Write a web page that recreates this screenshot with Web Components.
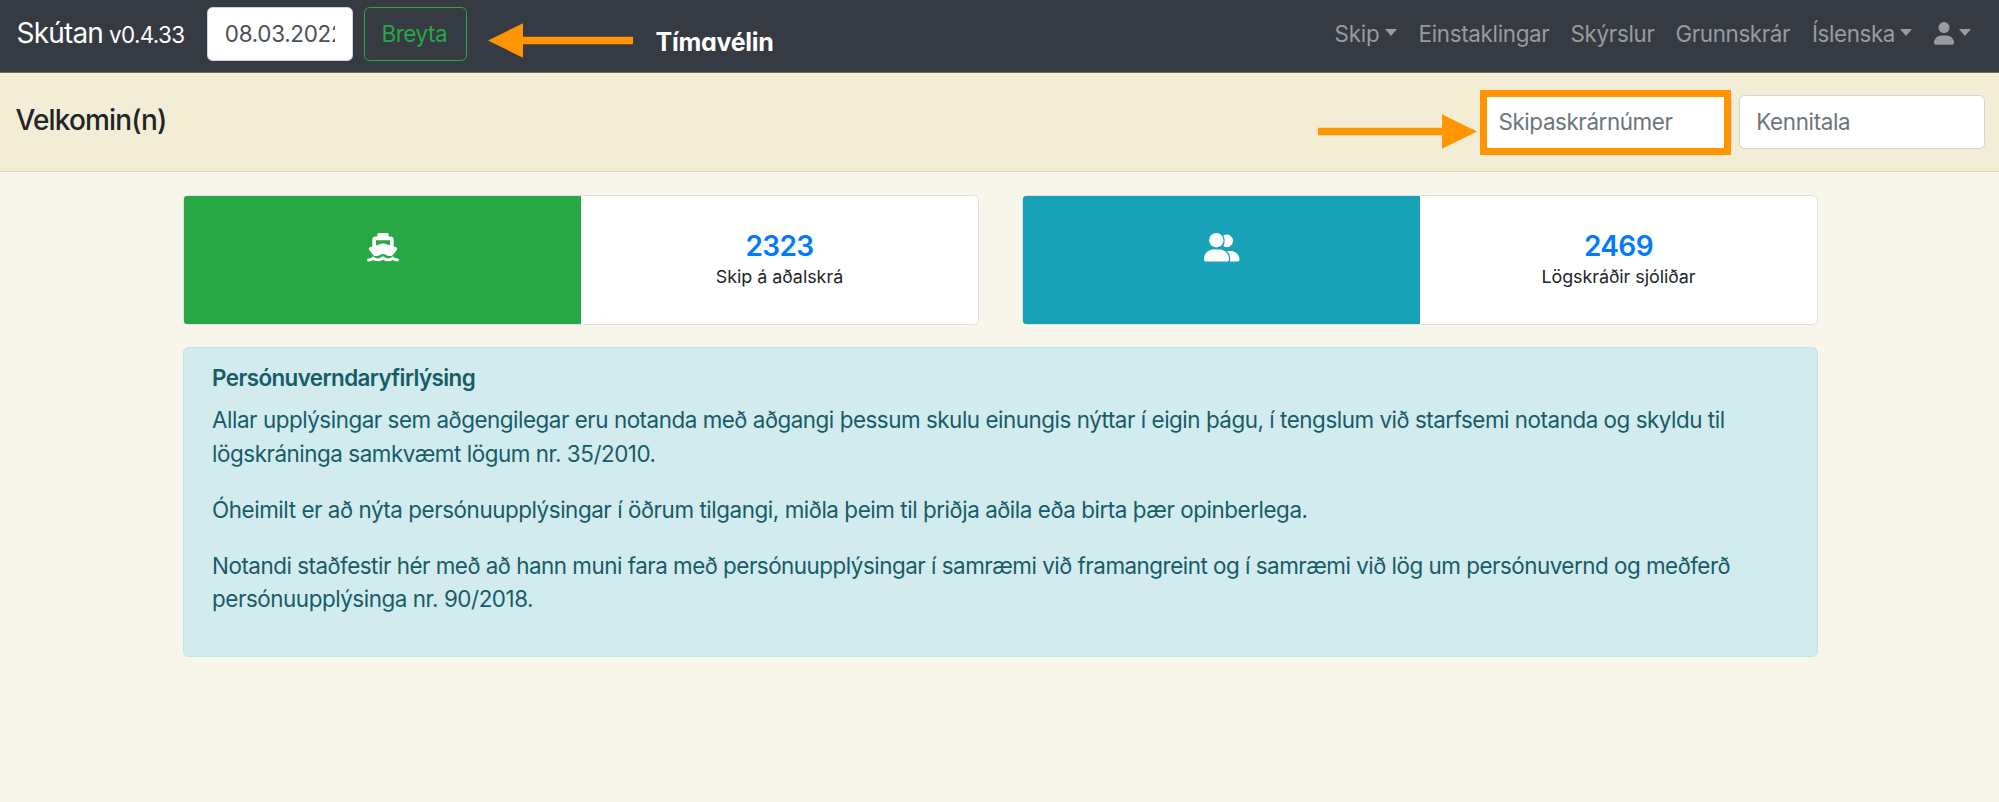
<!DOCTYPE html>
<html lang="is">
<head>
<meta charset="utf-8">
<title>Skútan</title>
<style>
html,body{margin:0;padding:0}
body{background:#f8f5ea;color:#212529;font:400 22.4px/33.6px Inter,"Liberation Sans",sans-serif;height:802px;overflow:hidden}
</style>
</head>
<body>
<app-page></app-page>
<script>
const define = (name, html, setup) => customElements.define(name, class extends HTMLElement {
  constructor() {
    super();
    const t = document.createElement('template');
    t.innerHTML = html;
    this.attachShadow({mode: 'open'}).append(t.content.cloneNode(true));
  }
  connectedCallback() { if (setup) setup(this, this.shadowRoot); }
});

// One line of text, tracked so that it spans the width given in "w".
define('text-line', `<style>:host{display:block;white-space:nowrap;flex:none}span{display:inline-block;font-kerning:normal}</style><span><slot></slot></span>`, (el, root) => {
  const w = +el.getAttribute('w'), s = root.querySelector('span');
  el.style.width = w + 'px';
  const natural = s.getBoundingClientRect().width;
  s.style.letterSpacing = ((w - natural) / el.textContent.length).toFixed(3) + 'px';
});

define('caret-down', `<style>:host{display:block;flex:none;width:0;height:0;border:6.5px solid transparent;border-top:7px solid currentColor;border-bottom:0}</style>`);

define('nav-item', `<style>:host{display:flex;align-items:center;flex:none}caret-down{margin-left:5px;position:relative;top:-1px}:host(:not([menu])) caret-down{display:none}</style><slot></slot><caret-down></caret-down>`);

define('text-field', `<style>:host{display:flex;box-sizing:border-box;align-items:center;background:#fff;border:1.4px solid #ced4da;border-radius:5.6px;padding:0 16.8px;height:53.5px;color:#6c757d;flex:none}
div{overflow:hidden;flex:1}</style><div><slot></slot></div>`);

define('outline-button', `<style>button{box-sizing:border-box;display:block;width:103px;height:53.5px;border:1.4px solid #28a745;border-radius:5.6px;background:none;color:#28a745;font:inherit;padding:0 0 0 17px;text-align:left}</style><button><slot></slot></button>`);

define('nav-bar', `<style>
:host{display:flex;position:relative;box-sizing:border-box;height:73px;padding:7px 0 11.5px 16.5px;background:#363a42;border-bottom:1px solid #6b6b68;align-items:center;color:#999b9f}
.brand{display:flex;align-items:baseline;color:#fff;width:190.5px;padding-bottom:1px}
.brand .name{font-size:28px;line-height:42px;margin-right:6px}
text-field{width:145.5px;color:#495057}
outline-button{margin-left:11px}
nav{display:flex;align-items:center;margin-left:868px}
.person{display:block;width:20px;height:23px}
</style>
<div class="brand"><text-line class="name" w="86.5">Skútan</text-line><text-line w="75.5">v0.4.33</text-line></div>
<text-field><text-line w="119.500">08.03.2022</text-line></text-field>
<outline-button><text-line w="65.5">Breyta</text-line></outline-button>
<nav>
<nav-item menu><text-line w="45">Skip</text-line></nav-item>
<nav-item style="margin-left:22px"><text-line w="131">Einstaklingar</text-line></nav-item>
<nav-item style="margin-left:21px"><text-line w="84">Skýrslur</text-line></nav-item>
<nav-item style="margin-left:21px"><text-line w="114.5">Grunnskrár</text-line></nav-item>
<nav-item menu style="margin-left:22px"><text-line w="83">Íslenska</text-line></nav-item>
<nav-item menu style="margin-left:21.500px"><svg class="person" viewBox="0 0 20 23" fill="currentColor"><circle cx="10" cy="5.6" r="5.5"/><path d="M0 20.8C0 16.8 3.5 13.6 7.5 13.6h5c4 0 7.500 3.200 7.500 7.200 0 1.300-.700 2-2 2H2c-1.300 0-2-.700-2-2z"/></svg></nav-item>
</nav>`);

define('welcome-bar', `<style>
:host{display:flex;box-sizing:border-box;height:99px;background:#f4edd6;border-bottom:1.5px solid #dbd5c2;padding:22px 14px 0 15.500px;justify-content:space-between}
h1{margin:3.5px 0 0;font-weight:500;font-size:28px;line-height:42px}
.fields{display:flex;gap:7px}
text-field{width:246.5px;line-height:35px}
text-field.ship{padding-left:12.500px}
</style>
<h1><text-line w="151">Velkomin(n)</text-line></h1>
<div class="fields"><text-field class="ship"><text-line w="174">Skipaskrárnúmer</text-line></text-field><text-field><text-line w="94">Kennitala</text-line></text-field></div>`);

define('stat-card', `<style>
:host{display:flex;box-sizing:border-box;height:129.500px;border:1.4px solid #dcdfe1;border-radius:5.600px;background:#fff}
.icon,.body{flex:1;display:flex;flex-direction:column;align-items:center}
.icon{background:var(--tone);color:#fff;padding-top:37px;box-sizing:border-box;border-radius:3px 0 0 3px}
.body{padding-top:34px;box-sizing:border-box}
::slotted(.num){color:#007bff;font-weight:600;font-size:28px;line-height:33.6px}
::slotted(.label){font-size:17.920px;line-height:26.900px;color:#212529;margin-top:0}
</style><div class="icon"><slot name="icon"></slot></div><div class="body"><slot></slot></div>`);

define('info-alert', `<style>
:host{display:block;box-sizing:border-box;height:309.500px;padding:13.200px 28px 0 28.300px;background:#d1ebef;border:1.4px solid #bee5eb;border-radius:5.600px;color:#175c68}
::slotted(h2){margin:0 0 8.400px;font-size:22.400px;font-weight:600;line-height:33.600px}
::slotted(p){margin:0 0 22.400px}
</style><slot></slot>`);

// Arrow annotation; the "left" attribute turns it round.
define('guide-arrow', `<style>:host{position:absolute;display:block}:host([left]){transform:scaleX(-1)}svg{display:block;width:100%;height:100%}</style>
<svg preserveAspectRatio="none" fill="#ff9500"></svg>`, (el, root) => {
  const w = +el.getAttribute('length'), svg = root.querySelector('svg');
  el.style.width = w + 'px';
  el.style.height = '35px';
  svg.setAttribute('viewBox', `0 0 ${w} 35`);
  svg.innerHTML = `<path d="M0 13.700H${w-35}V.2L${w} 17.500 ${w-35} 34.800V21.300H0z"/>`;
});

define('app-page', `<style>
:host{display:block;position:relative}
main{width:1635px;margin:23px 0 0 182.800px;display:flex;flex-direction:column;gap:22.500px}
.cards{display:grid;grid-template-columns:795.500px 795.500px;justify-content:space-between;padding:0 0 0 .5px}
stat-card svg{display:block}
.ring{position:absolute;left:1479.500px;top:90px;width:251.500px;height:65px;box-sizing:border-box;border:7px solid #ff9500}
.note{position:absolute;left:655.500px;top:25.500px;color:#fff;font-weight:700;font-size:25px;font-feature-settings:"cv11"}
</style>
<nav-bar></nav-bar>
<welcome-bar></welcome-bar>
<main>
<div class="cards">
<stat-card style="--tone:#28a745">
<svg slot="icon" width="32" height="29" viewBox="0 0 32 29" fill="#fff"><path fill-rule="evenodd" d="M12 0h8c1 0 1.700.7 1.700 1.700V3.500h2.100c1.600 0 2.900 1.300 2.900 2.900v7l2.300.8c1.200.4 1.500 1.700.8 2.700l-3.900 5c-.9.9-2 1.300-3.200 1.200-1.600 0-2.800-.5-4-1.300-1.600-1.100-3.800-1.100-5.400 0-1.200.8-2.500 1.300-4 1.300-1.200.1-2.300-.3-3.200-1.200l-3.900-5c-.7-1-.4-2.300.8-2.700l2.300-.8v-7c0-1.600 1.300-2.900 2.900-2.900h2.100V1.700C10.300.7 11 0 12 0zM9 7.200v5.200l5.600-1.800c.9-.3 1.900-.3 2.800 0l5.600 1.800V7.200z"/><path d="M1.500 27c2 0 3.400-.7 4.600-1.800 2.500 2.200 6.900 2.200 9.900-.2 3 2.400 7.400 2.400 9.900.2 1.200 1.100 2.600 1.800 4.600 1.800" fill="none" stroke="#fff" stroke-width="2.900" stroke-linecap="round"/></svg>
<text-line class="num" w="68">2323</text-line><text-line class="label" w="127.500">Skip á aðalskrá</text-line>
</stat-card>
<stat-card style="--tone:#17a2b8">
<svg slot="icon" width="36" height="29" viewBox="0 0 36 29" fill="#fff"><circle cx="12.300" cy="7.200" r="7.200"/><path d="M19.400 2.600A6.200 6.200 0 1 1 19.400 13.100C21.100 9.900 21.100 5.900 19.400 2.600z"/><path d="M0 26.200C0 20.500 4.400 16.500 9.500 16.500h6c5.100 0 9.500 4 9.500 9.700 0 1.500-.8 2.300-2.200 2.300H2.200C.8 28.500 0 27.700 0 26.200z"/><path d="M22.700 18h3.800c4.900 0 9 3.700 9 8.300 0 1.400-.8 2.200-2.100 2.200h-7.500c.9-4.200-.2-7.900-3.200-10.500z"/></svg>
<text-line class="num" w="69">2469</text-line><text-line class="label" w="154">Lögskráðir sjóliðar</text-line>
</stat-card>
</div>
<info-alert>
<h2><text-line w="263">Persónuverndaryfirlýsing</text-line></h2>
<p><text-line w="1512.500">Allar upplýsingar sem aðgengilegar eru notanda með aðgangi þessum skulu einungis nýttar í eigin þágu, í tengslum við starfsemi notanda og skyldu til</text-line><text-line w="443.500">lögskráninga samkvæmt lögum nr. 35/2010.</text-line></p>
<p><text-line w="1095.500">Óheimilt er að nýta persónuupplýsingar í öðrum tilgangi, miðla þeim til þriðja aðila eða birta þær opinberlega.</text-line></p>
<p><text-line w="1518">Notandi staðfestir hér með að hann muni fara með persónuupplýsingar í samræmi við framangreint og í samræmi við lög um persónuvernd og meðferð</text-line><text-line w="321">persónuupplýsinga nr. 90/2018.</text-line></p>
</info-alert>
</main>
<guide-arrow left length="145" style="left:487.500px;top:22.500px"></guide-arrow>
<text-line class="note" w="118">Tímavélin</text-line>
<guide-arrow length="159" style="left:1317.500px;top:113.500px"></guide-arrow>
<div class="ring"></div>`);
</script>
</body>
</html>
